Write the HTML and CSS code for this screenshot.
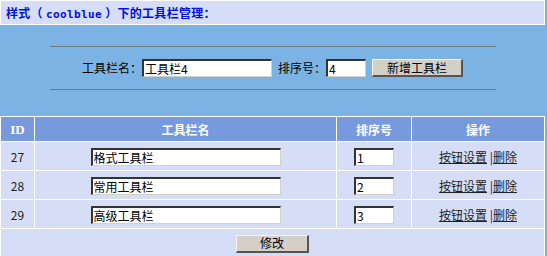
FILE: index.html
```html
<!DOCTYPE html>
<html lang="zh-CN">
<head>
<meta charset="utf-8">
<title>工具栏管理</title>
<link rel="stylesheet" href="styles.css">
</head>
<body>
<div class="page">
  <div class="title">样式（ <span class="latin">coolblue</span> ）下的工具栏管理：</div>

  <div class="add-area">
    <div class="rule"></div>
    <form class="add-row">
      <label class="lbl">工具栏名：</label>
      <input class="field field-name" type="text" value="工具栏4">
      <label class="lbl lbl-order">排序号：</label>
      <input class="field field-order" type="text" value="4">
      <button class="btn btn-add" type="button">新增工具栏</button>
    </form>
    <div class="rule"></div>
  </div>

  <table class="grid">
    <tr class="head">
      <th class="c-id"><span class="latin-serif">ID</span></th>
      <th class="c-name">工具栏名</th>
      <th class="c-order">排序号</th>
      <th class="c-op">操作</th>
    </tr>
    <tr>
      <td class="c-id">27</td>
      <td class="c-name"><input class="field cell-name" type="text" value="格式工具栏"></td>
      <td class="c-order"><input class="field cell-order" type="text" value="1"></td>
      <td class="c-op"><a href="#">按钮设置</a> |<a href="#">删除</a></td>
    </tr>
    <tr>
      <td class="c-id">28</td>
      <td class="c-name"><input class="field cell-name" type="text" value="常用工具栏"></td>
      <td class="c-order"><input class="field cell-order" type="text" value="2"></td>
      <td class="c-op"><a href="#">按钮设置</a> |<a href="#">删除</a></td>
    </tr>
    <tr>
      <td class="c-id">29</td>
      <td class="c-name"><input class="field cell-name" type="text" value="高级工具栏"></td>
      <td class="c-order"><input class="field cell-order" type="text" value="3"></td>
      <td class="c-op"><a href="#">按钮设置</a> |<a href="#">删除</a></td>
    </tr>
    <tr>
      <td class="foot" colspan="4"><button class="btn btn-save" type="button">修改</button></td>
    </tr>
  </table>
</div>
</body>
</html>
```

FILE: styles.css
```css
html, body {
  margin: 0;
  padding: 0;
}
body {
  background: #7bb4e4;
  font-family: "Noto Sans CJK SC", "Noto Sans", sans-serif;
  font-size: 12px;
  color: #000;
}
.page {
  width: 545px;
}
.title {
  box-sizing: border-box;
  height: 25px;
  border: 1px solid #fff;
  background: #d6def7;
  color: #0010e0;
  font-weight: bold;
  font-size: 12px;
  line-height: 23px;
  letter-spacing: 0.3px;
  padding-left: 5px;
  white-space: nowrap;
}
.latin {
  font-family: "DejaVu Sans Mono", monospace;
  font-size: 11px;
  letter-spacing: 0.4px;
}
.add-area {
  padding-top: 21px;
  padding-bottom: 26px;
}
.rule {
  width: 446px;
  margin: 0 auto;
  border-top: 1px solid #7a7a7a;
}
.add-row {
  display: flex;
  justify-content: center;
  align-items: center;
  margin: 12px 0;
  height: 18px;
}
.lbl {
  line-height: 18px;
  white-space: nowrap;
}
.lbl-order {
  margin-left: 6px;
}
.field {
  box-sizing: border-box;
  height: 18px;
  margin: 0;
  padding: 0 1px;
  border-style: solid;
  border-width: 2px 1px 1px 2px;
  border-color: #333 #d4d0c8 #d4d0c8 #333;
  background: #fff;
  font-family: "Noto Sans CJK SC", "Noto Sans", sans-serif;
  font-size: 12px;
  line-height: 14px;
  color: #000;
  outline: none;
}
.field-name {
  width: 130px;
}
.field-order {
  width: 40px;
}
.btn {
  box-sizing: border-box;
  height: 18px;
  margin: 0;
  padding: 0;
  background: #d4d0c8;
  border-style: solid;
  border-width: 1px 2px 2px 1px;
  border-color: #f4f4f4 #555 #555 #f4f4f4;
  font-family: "Noto Sans CJK SC", "Noto Sans", sans-serif;
  font-size: 12px;
  line-height: 14px;
  color: #000;
}
.btn-add {
  width: 91px;
  margin-left: 6px;
}
.btn-save {
  width: 73px;
}
.grid {
  table-layout: fixed;
  width: 545px;
  border-collapse: separate;
  border-spacing: 1px;
  background: #fff;
}
.grid th,
.grid td {
  padding: 0;
  text-align: center;
  vertical-align: middle;
}
.grid th {
  height: 24px;
  background: #7799dd;
  color: #fff;
  font-weight: bold;
}
.grid td {
  height: 28px;
  background: #d6def7;
  color: #222;
}
.latin-serif {
  font-family: "Liberation Serif", serif;
  font-size: 13px;
}
.c-id { width: 33px; }
.c-name { width: 301px; }
.c-order { width: 74px; }
.c-op { width: 132px; }
.cell-name {
  width: 190px;
  vertical-align: middle;
}
.cell-order {
  width: 40px;
  vertical-align: middle;
}
.c-op a {
  color: #222;
  text-decoration: underline;
}
.grid td.foot {
  height: 28px;
  vertical-align: top;
  padding-top: 5px;
}
```
